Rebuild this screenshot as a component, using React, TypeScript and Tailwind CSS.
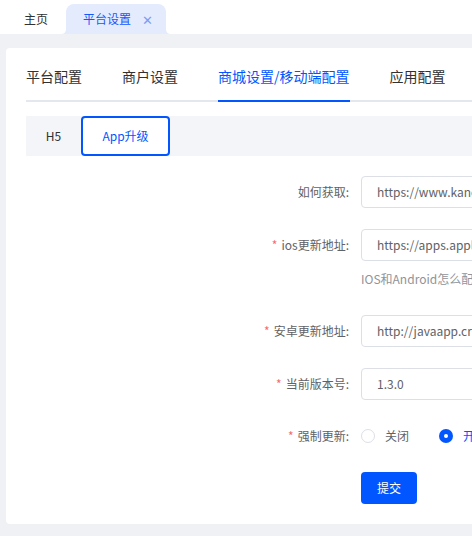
import React from "react";

const FONT = { fontFamily: '"Noto Sans CJK SC", "Noto Sans", sans-serif' };

const TABS = ["平台配置", "商户设置", "商城设置/移动端配置", "应用配置"];

function Flare({ side }: { side: "left" | "right" }) {
  // small concave corner that joins the active tab to the header's bottom edge
  const d = side === "left" ? "M0 5 Q5 5 5 0 L5 5 Z" : "M5 5 Q0 5 0 0 L0 5 Z";
  return (
    <svg
      width="5"
      height="5"
      viewBox="0 0 5 5"
      className={side === "left" ? "absolute bottom-0 -left-[5px]" : "absolute bottom-0 -right-[5px]"}
    >
      <path d={d} fill="#e3ebfd" />
    </svg>
  );
}

function Row({
  label,
  required,
  children,
}: {
  label: string;
  required?: boolean;
  children: React.ReactNode;
}) {
  return (
    <div className="flex items-center h-[32px]">
      <div className="w-[335px] shrink-0 pr-[12px] text-right text-[12px] text-[#606266]">
        {required && <span className="text-[#f56c6c] mr-[4px]">*</span>}
        {label}:
      </div>
      {children}
    </div>
  );
}

function Input({ value }: { value: string }) {
  return (
    <div className="h-[32px] w-[360px] shrink-0 border border-[#dcdfe6] rounded-[4px] px-[15px] flex items-center text-[12px] text-[#606266] bg-white whitespace-nowrap overflow-hidden">
      {value}
    </div>
  );
}

export default function App() {
  return (
    <div className="w-[472px] h-[536px] bg-[#f0f1f5] overflow-hidden flex flex-col" style={FONT}>
      {/* top tab bar */}
      <div className="h-[34px] bg-white flex items-end shrink-0">
        <div className="pl-[24px] pr-[18px] h-[30px] flex items-center text-[12px] text-[#303133]">主页</div>
        <div className="relative h-[30px] w-[100px] rounded-t-[8px] bg-[#e3ebfd] flex items-center pl-[17px] text-[12px] text-[#1458fb]">
          <Flare side="left" />
          平台设置
          <span className="ml-[11px] text-[13px] text-[#7d9cf3] leading-none">✕</span>
          <Flare side="right" />
        </div>
      </div>

      {/* content card */}
      <div className="mt-[14px] ml-[6px] w-[600px] h-[476px] bg-white rounded-[4px] pl-[20px] shrink-0">
        {/* tabs */}
        <div className="flex gap-[40px] pt-[18px] border-b-2 border-[#e4e7ed] text-[14px]">
          {TABS.map((t, i) => (
            <div
              key={t}
              className={
                i === 2
                  ? "leading-[20px] pb-[14px] border-b-2 border-[#0256ff] -mb-[2px] text-[#0256ff]"
                  : "leading-[20px] pb-[14px] text-[#303133]"
              }
            >
              {t}
            </div>
          ))}
        </div>

        {/* sub tabs */}
        <div className="mt-[14px] h-[40px] bg-[#f4f5f9] flex text-[12px]">
          <div className="w-[55px] flex items-center justify-center text-[#303133]">H5</div>
          <div className="w-[89px] flex items-center justify-center bg-white border-2 border-[#0256ff] rounded-[4px] text-[#0256ff]">
            App升级
          </div>
        </div>

        {/* form */}
        <div className="mt-[20px]">
          <Row label="如何获取">
            <Input value="https://www.kancloud.cn/java_app" />
          </Row>
          <div className="mt-[21px]">
            <Row label="ios更新地址" required>
              <Input value="https://apps.apple.com/cn/app/" />
            </Row>
          </div>
          <div className="pl-[335px] mt-[8px] leading-[20px] text-[12px] text-[#909399] whitespace-nowrap">
            IOS和Android怎么配置更新地址
          </div>
          <div className="mt-[26px]">
            <Row label="安卓更新地址" required>
              <Input value="http://javaapp.crmeb.net/app.apk" />
            </Row>
          </div>
          <div className="mt-[21px]">
            <Row label="当前版本号" required>
              <Input value="1.3.0" />
            </Row>
          </div>
          <div className="mt-[20px]">
            <Row label="强制更新" required>
              <div className="flex items-center text-[12px]">
                <span className="w-[14px] h-[14px] rounded-full border border-[#dcdfe6] bg-white" />
                <span className="ml-[10px] text-[#606266]">关闭</span>
                <span className="ml-[30px] w-[14px] h-[14px] rounded-full bg-[#0256ff] flex items-center justify-center">
                  <span className="w-[4px] h-[4px] rounded-full bg-white" />
                </span>
                <span className="ml-[10px] text-[#0256ff]">开启</span>
              </div>
            </Row>
          </div>
          <div className="mt-[20px] pl-[335px]">
            <button className="w-[56px] h-[32px] rounded-[4px] bg-[#0256ff] text-white text-[12px]">提交</button>
          </div>
        </div>
      </div>
    </div>
  );
}
